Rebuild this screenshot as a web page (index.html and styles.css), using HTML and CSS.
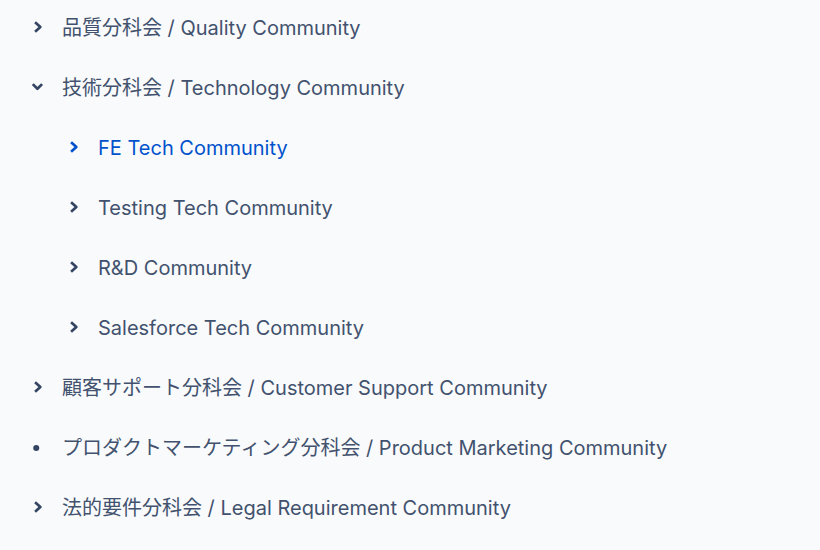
FILE: index.html
```html
<!DOCTYPE html>
<html lang="ja">
<head>
  <meta charset="UTF-8" />
  <title>Page tree</title>
  <link rel="stylesheet" href="styles.css">
</head>
<body>

  <ul class="pohon">
    <li class="baris">
      <span class="ikon"><svg viewBox="0 0 12 12"><polyline points="3.5,2 8,6 3.5,10" /></svg></span>
      <a>品質分科会 / Quality Community</a>
    </li>
    <li class="baris">
      <span class="ikon"><svg viewBox="0 0 12 12"><polyline points="1.5,3.5 5.5,7.5 9.5,3.5" /></svg></span>
      <a>技術分科会 / Technology Community</a>
    </li>
    <li class="baris anak aktif">
      <span class="ikon"><svg viewBox="0 0 12 12"><polyline points="3.5,2 8,6 3.5,10" /></svg></span>
      <a>FE Tech Community</a>
    </li>
    <li class="baris anak">
      <span class="ikon"><svg viewBox="0 0 12 12"><polyline points="3.5,2 8,6 3.5,10" /></svg></span>
      <a>Testing Tech Community</a>
    </li>
    <li class="baris anak">
      <span class="ikon"><svg viewBox="0 0 12 12"><polyline points="3.5,2 8,6 3.5,10" /></svg></span>
      <a>R&amp;D Community</a>
    </li>
    <li class="baris anak">
      <span class="ikon"><svg viewBox="0 0 12 12"><polyline points="3.5,2 8,6 3.5,10" /></svg></span>
      <a>Salesforce Tech Community</a>
    </li>
    <li class="baris">
      <span class="ikon"><svg viewBox="0 0 12 12"><polyline points="3.5,2 8,6 3.5,10" /></svg></span>
      <a>顧客サポート分科会 / Customer Support Community</a>
    </li>
    <li class="baris">
      <span class="ikon titik"><svg viewBox="0 0 12 12"><circle cx="4.5" cy="6" r="2.6" /></svg></span>
      <a>プロダクトマーケティング分科会 / Product Marketing Community</a>
    </li>
    <li class="baris">
      <span class="ikon"><svg viewBox="0 0 12 12"><polyline points="3.5,2 8,6 3.5,10" /></svg></span>
      <a>法的要件分科会 / Legal Requirement Community</a>
    </li>
  </ul>

</body>
</html>
```

FILE: styles.css
```css
* {
  margin: 0;
  padding: 0;
  box-sizing: border-box;
}

html, body {
  height: 100%;
  background: #f9fafc;
  font-family: Inter, "Noto Sans CJK JP", sans-serif;
}

.pohon {
  list-style: none;
  margin-top: -2px;
  padding-left: 28px;
}

.baris {
  display: flex;
  align-items: center;
  height: 60px;
  color: #42526e;
  font-size: 20px;
  line-height: 28px;
}

.baris.anak {
  padding-left: 36px;
}

.baris a {
  color: inherit;
  text-decoration: none;
  cursor: pointer;
}

.baris.aktif {
  color: #0052cc;
}

.ikon {
  display: flex;
  align-items: flex-start;
  width: 34px;
  flex-shrink: 0;
  color: #344563;
}

.baris.aktif .ikon {
  color: #0052cc;
}

.ikon svg {
  width: 14px;
  height: 14px;
  margin-left: 3px;
  margin-bottom: 3px;
}

.ikon polyline {
  fill: none;
  stroke: currentColor;
  stroke-width: 2.3;
  stroke-linejoin: round;
}

.ikon.titik svg {
  margin-bottom: 0;
}

.ikon circle {
  fill: currentColor;
}
```
